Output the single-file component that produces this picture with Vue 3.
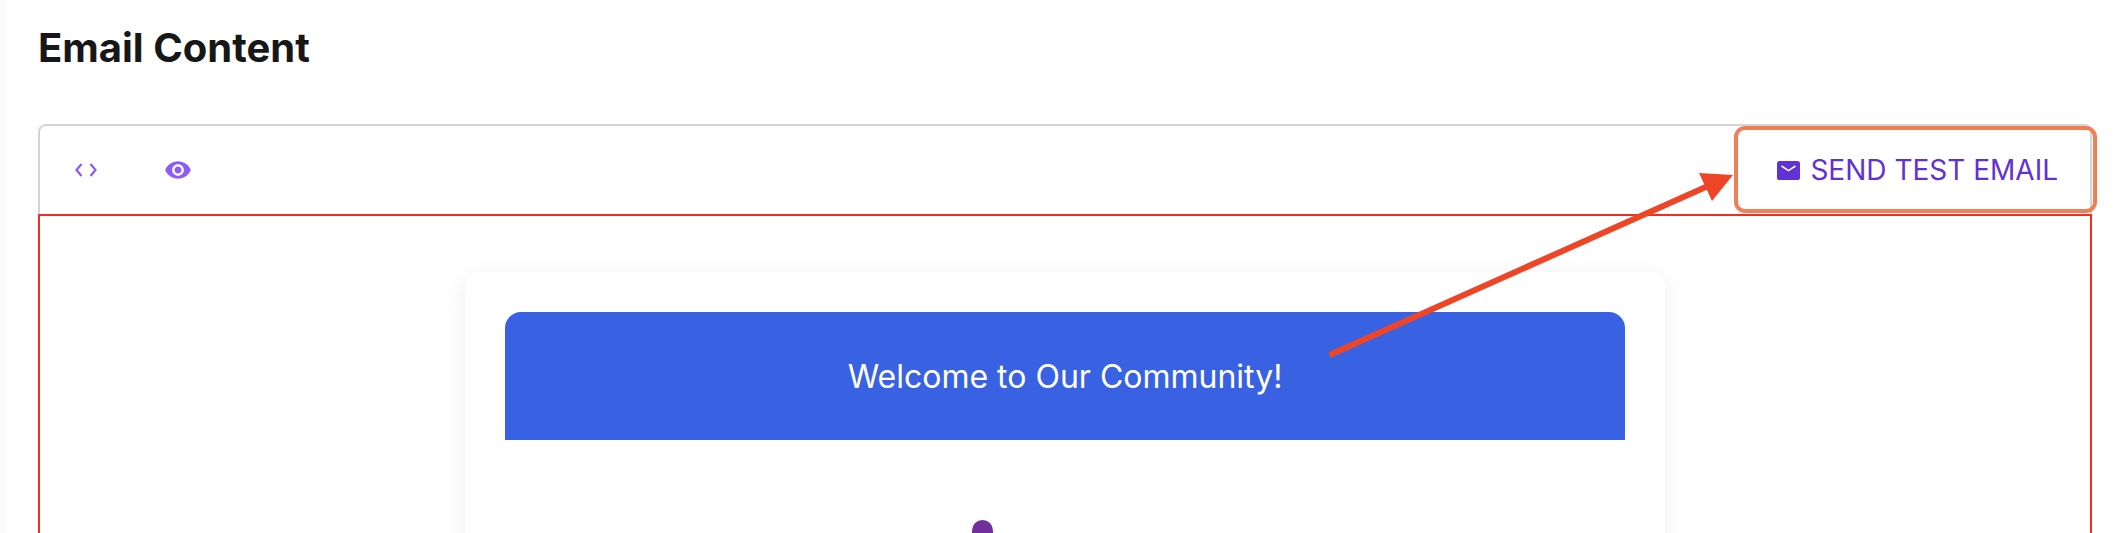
<script setup>
const title = 'Email Content'
const heading = 'Welcome to Our Community!'
</script>

<template>
  <div class="page">
    <div class="rail"></div>
    <main class="content">
      <h1 class="title">{{ title }}</h1>
      <section class="editor">
        <div class="toolbar">
          <div class="modes">
            <button class="mode">
              <svg viewBox="0 0 22 14" width="22" height="14" fill="none" stroke="currentColor" stroke-width="2.2">
                <path d="M6.5 1 1.5 7l5 6M15.500 1l5 6-5 6" />
              </svg>
            </button>
            <button class="mode">
              <svg viewBox="0 0 24 24" width="28" height="28" fill="currentColor">
                <path d="M12 4.5C7 4.5 2.73 7.61 1 12c1.73 4.39 6 7.5 11 7.5s9.27-3.11 11-7.5c-1.73-4.39-6-7.5-11-7.5zM12 17c-2.76 0-5-2.24-5-5s2.24-5 5-5 5 2.24 5 5-2.24 5-5 5zm0-8c-1.66 0-3 1.34-3 3s1.34 3 3 3 3-1.34 3-3-1.34-3-3-3z" />
              </svg>
            </button>
          </div>
          <button class="send">
            <svg viewBox="0 0 23 19" width="23" height="19">
              <rect width="23" height="19" rx="2.6" fill="currentColor" />
              <path d="M4.5 5 11.5 9.600 18.500 5" fill="none" stroke="#fff" stroke-width="1.500" />
            </svg>
            <span>SEND TEST EMAIL</span>
          </button>
        </div>
        <div class="preview">
          <div class="card">
            <div class="banner">{{ heading }}</div>
            <div class="body">
              <div class="logo"></div>
            </div>
          </div>
        </div>
      </section>
    </main>
    <svg class="marks" viewBox="0 0 2120 533" width="2120" height="533">
      <rect x="1736" y="128" width="359" height="83" rx="9" fill="none" stroke="#ef7f56" stroke-width="4" />
      <path d="M1329.5 355 1708 186" fill="none" stroke="#ee4526" stroke-width="6" />
      <path d="M1699 173 1733 175 1712 201z" fill="#ee4526" />
    </svg>
  </div>
</template>

<style scoped>
.page {
  position: relative;
  display: flex;
  width: 2120px;
  height: 533px;
  overflow: hidden;
  background: #fff;
  font-family: Inter, "Liberation Sans", sans-serif;
}

.rail {
  width: 6px;
  flex: none;
  background: #fafafa;
}

.content {
  flex: 1;
  min-width: 0;
  padding: 0 28px 0 32px;
}

.title {
  margin: 24px 0 0;
  height: 47px;
  line-height: 47px;
  font-size: 40px;
  font-weight: 700;
  color: #171717;
}

.editor {
  margin-top: 53px;
  border: 2px solid #d4d4d4;
  border-bottom: 0;
  border-radius: 8px 8px 0 0;
}

.toolbar {
  display: flex;
  align-items: center;
  justify-content: space-between;
  height: 88px;
  margin: 0 -2px;
  padding: 0 0 0 37px;
}

.modes {
  display: flex;
  align-items: center;
  gap: 67px;
}

.mode {
  display: flex;
  align-items: center;
  justify-content: center;
  padding: 0;
  border: 0;
  background: none;
  color: #8b5cf6;
}

.send {
  display: flex;
  align-items: center;
  gap: 10px;
  padding: 0 34px 0 0;
  border: 0;
  background: none;
  color: #6231d4;
  font: 400 28px Inter, "Liberation Sans", sans-serif;
}

.preview {
  margin: 0 -2px;
  padding: 56px 0 0;
  height: 320px;
  border: 2px solid #ec2f20;
  border-bottom: 0;
  box-sizing: border-box;
  display: flex;
  justify-content: center;
}

.card {
  width: 1200px;
  height: 400px;
  flex: none;
  padding: 40px;
  box-sizing: border-box;
  background: #fff;
  border-radius: 16px;
  box-shadow: 0 4px 24px rgba(0, 0, 0, 0.07);
}

.banner {
  height: 128px;
  display: flex;
  align-items: center;
  justify-content: center;
  border-radius: 16px 16px 0 0;
  background: #3962e3;
  color: #fff;
  font-size: 32px;
}

.body {
  display: flex;
  justify-content: center;
  padding-top: 80px;
}

.logo {
  width: 21px;
  height: 40px;
  margin-right: 166px;
  border-radius: 11px;
  background: #702f9b;
}

.marks {
  position: absolute;
  top: 0;
  left: 0;
  pointer-events: none;
}
</style>
